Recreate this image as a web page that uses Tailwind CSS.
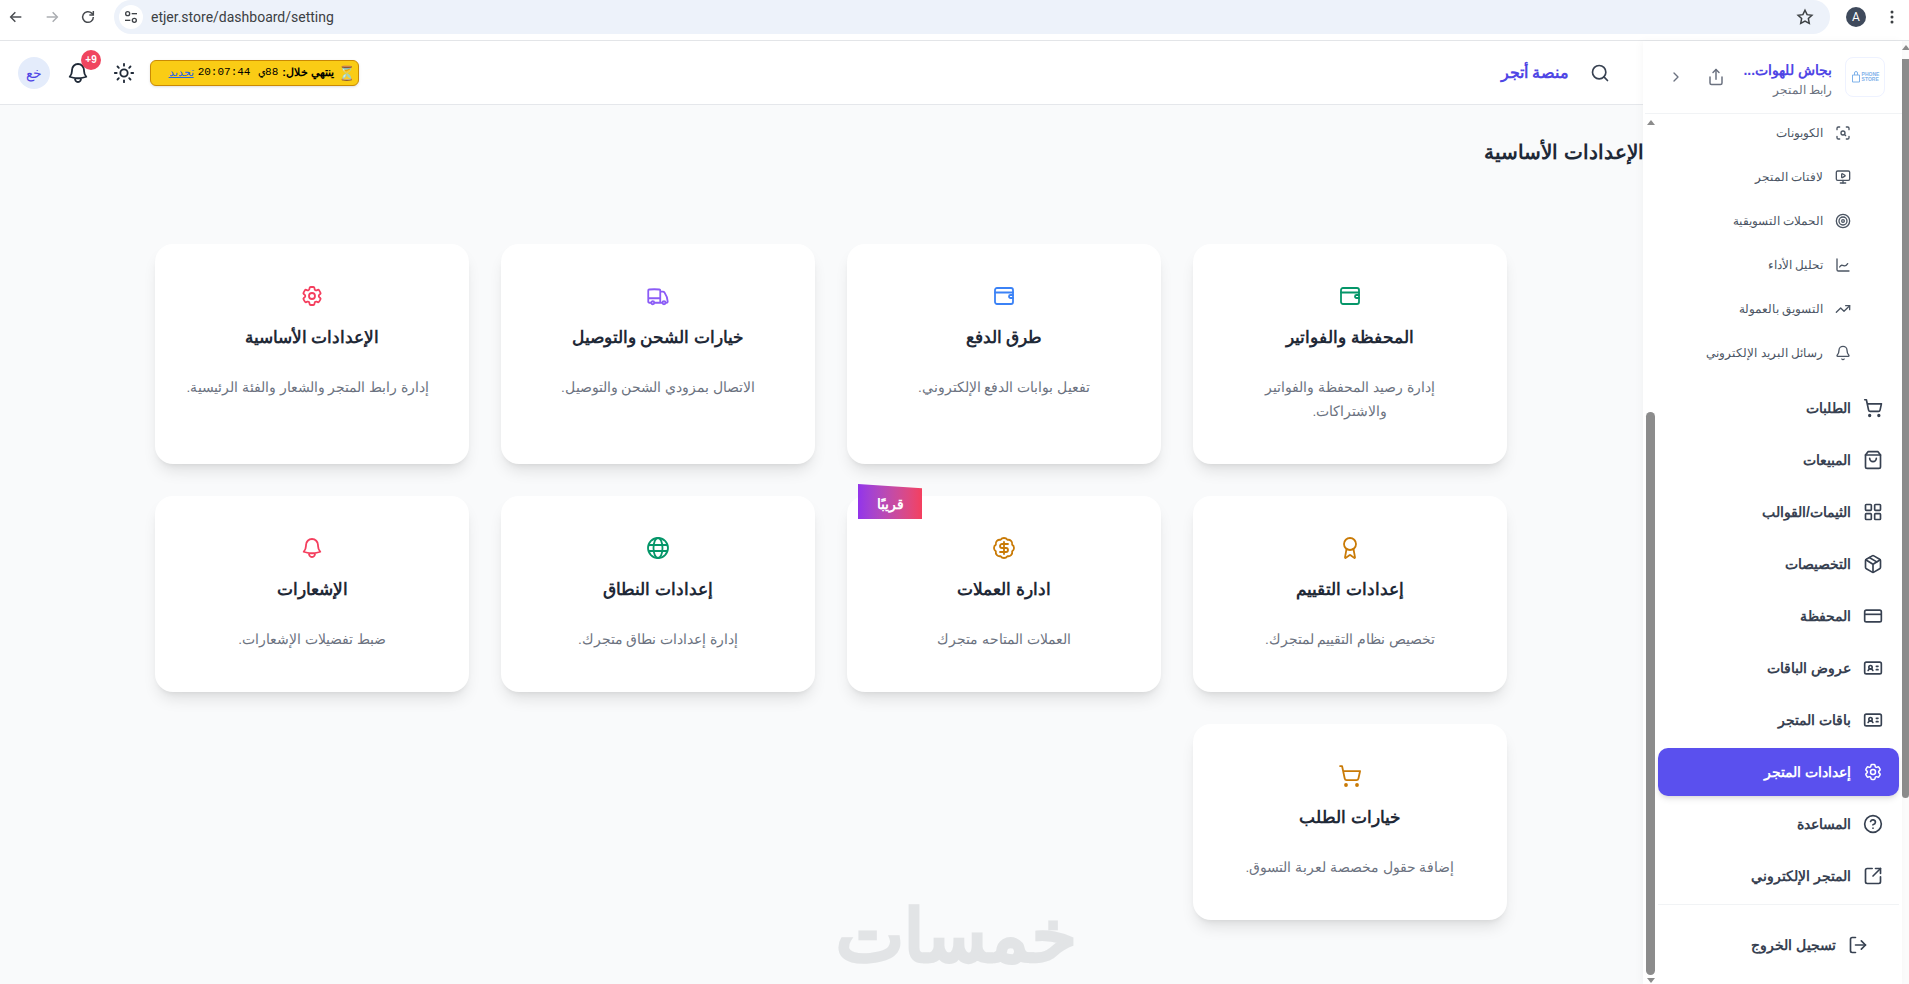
<!DOCTYPE html>
<html lang="ar" dir="rtl">
<head>
  <meta charset="UTF-8" />
  <meta name="viewport" content="width=device-width, initial-scale=1.0"/>
  <title>إعدادات المتجر</title>
  <script src="https://cdn.jsdelivr.net/npm/@tailwindcss/browser@4"></script>
</head>
<body class="h-screen overflow-hidden bg-white text-gray-800 font-['Liberation_Sans',sans-serif]">

  <!-- Browser bar -->
  <div dir="ltr" class="h-[41px] flex items-start border-b border-[#e3e5e8] bg-white">
    <div class="w-[114px] h-[34px] flex items-center shrink-0 pl-[8px] gap-[20px] text-[#474a4f]">
      <svg class="w-4 h-4" viewBox="0 0 24 24" fill="none" stroke="currentColor" stroke-width="2.2"><path d="M20 12H5"/><path d="m11 5-7 7 7 7"/></svg>
      <svg class="w-4 h-4 text-[#a9acb0]" viewBox="0 0 24 24" fill="none" stroke="currentColor" stroke-width="2.2"><path d="M4 12h15"/><path d="m13 5 7 7-7 7"/></svg>
      <svg class="w-4 h-4" viewBox="0 0 24 24" fill="none" stroke="currentColor" stroke-width="2.2"><path d="M20 12a8 8 0 1 1-2.5-5.8L20 8.5"/><path d="M20 3v6h-6"/></svg>
    </div>
    <div class="w-[1716px] h-[34px] rounded-[17px] bg-[#edf2fa] flex items-center pl-[5px] pr-[16px] font-['Roboto',sans-serif]">
      <div class="w-6 h-6 rounded-full bg-white flex items-center justify-center text-[#3f4348]">
        <svg class="w-4 h-4" viewBox="0 0 24 24" fill="none" stroke="currentColor" stroke-width="2"><circle cx="7" cy="7" r="3"/><path d="M13 7h8"/><circle cx="17" cy="17" r="3"/><path d="M3 17h8"/></svg>
      </div>
      <span class="ml-[8px] text-sm text-[#3c4043]">etjer.store/dashboard/setting</span>
      <svg class="w-[18px] h-[18px] ml-auto text-[#3c4043]" viewBox="0 0 24 24" fill="none" stroke="currentColor" stroke-width="2"><path d="m12 3 2.8 5.9 6.4.8-4.7 4.4 1.2 6.4L12 17.4l-5.7 3.1 1.2-6.4-4.7-4.4 6.4-.8z"/></svg>
    </div>
    <div class="flex-1 h-[34px] flex items-center pl-[16px] font-['Roboto',sans-serif]">
      <div class="w-5 h-5 rounded-full bg-[#3f4a5c] text-white text-xs flex items-center justify-center">A</div>
      <svg class="w-4 h-4 ml-[18px] text-[#3c4043]" viewBox="0 0 16 16" fill="currentColor"><circle cx="8" cy="3" r="1.5"/><circle cx="8" cy="8" r="1.5"/><circle cx="8" cy="13" r="1.5"/></svg>
    </div>
  </div>

  <div class="h-[943px] flex">
    <!-- Page scrollbar -->
    <div class="w-[7px] shrink-0 bg-[#fbfbfb] flex flex-col items-center">
      <div class="mt-[4px] w-0 h-0 border-x-[4px] border-x-transparent border-b-[5px] border-b-[#8c8c8c]"></div>
      <div class="mt-[9px] w-full h-[739px] bg-[#8c8c8c] rounded-b-md"></div>
    </div>

    <!-- Sidebar -->
    <aside class="relative z-10 w-[259px] shrink-0 bg-white pl-[2px] shadow-[-2px_0_8px_rgba(0,0,0,0.03)] flex flex-col">
      <div class="h-[73px] shrink-0 border-b border-[#f1f3f5] flex items-center pr-[17px]">
        <div class="w-10 h-10 rounded-lg border border-[#eef2ff] flex items-center justify-center shrink-0">
          <span dir="ltr" class="flex items-center gap-[1px] text-[#7fb2ea]">
            <svg class="w-[10px] h-3" viewBox="0 0 10 12" fill="none" stroke="currentColor" stroke-width="1"><path d="M1.5 4h7v7h-7z"/><path d="M3.5 4V2a1.5 1.5 0 0 1 3 0v2"/></svg>
            <span class="text-[5px] leading-[5px] font-bold">PHONE<br>STORE</span>
          </span>
        </div>
        <div class="mr-[13px] w-[88px] shrink-0">
          <div class="text-sm leading-6 pt-[1px] font-bold text-[#4f46e5] whitespace-nowrap">بجاش للهوات...</div>
          <div class="text-xs leading-4 text-[#6b7280]">رابط المتجر</div>
        </div>
        <svg class="mr-[19px] w-[18px] h-[18px] text-[#6b7280]" viewBox="0 0 24 24" fill="none" stroke="currentColor" stroke-width="2" stroke-linecap="round" stroke-linejoin="round"><path d="M4 12v8a2 2 0 0 0 2 2h12a2 2 0 0 0 2-2v-8"/><path d="m16 6-4-4-4 4"/><path d="M12 2v13"/></svg>
        <svg class="mr-[23px] w-4 h-4 text-[#6b7280]" viewBox="0 0 24 24" fill="none" stroke="currentColor" stroke-width="2" stroke-linecap="round" stroke-linejoin="round"><path d="m9 18 6-6-6-6"/></svg>
      </div>

      <!-- Sidebar scrollbar -->
      <div class="absolute left-[3px] top-[79px] bottom-0 w-[9px] flex flex-col items-center">
        <div class="w-0 h-0 border-x-[4px] border-x-transparent border-b-[5px] border-b-[#8c8c8c]"></div>
        <div class="mt-[287px] w-full h-[563px] shrink-0 bg-[#8c8c8c] rounded-full"></div>
        <div class="mt-[3px] w-0 h-0 border-x-[4px] border-x-transparent border-t-[5px] border-t-[#8c8c8c]"></div>
      </div>

      <nav class="flex-1 overflow-hidden pl-[13px] pr-[3px] text-[#374151]">
        <div class="-mt-[3px] mb-[9px] text-xs text-[#4b5563]">
          <a class="h-11 flex items-center gap-3 pr-12">
            <svg class="w-4 h-4" viewBox="0 0 24 24" fill="none" stroke="currentColor" stroke-width="2" stroke-linecap="round" stroke-linejoin="round"><path d="M3 7V5a2 2 0 0 1 2-2h2"/><path d="M17 3h2a2 2 0 0 1 2 2v2"/><path d="M21 17v2a2 2 0 0 1-2 2h-2"/><path d="M7 21H5a2 2 0 0 1-2-2v-2"/><circle cx="12" cy="12" r="3"/><path d="m16 16-1.9-1.9"/></svg>
            الكوبونات
          </a>
          <a class="h-11 flex items-center gap-3 pr-12">
            <svg class="w-4 h-4" viewBox="0 0 24 24" fill="none" stroke="currentColor" stroke-width="2" stroke-linecap="round" stroke-linejoin="round"><path d="M10 7.75a.75.75 0 0 1 1.142-.638l3.664 2.249a.75.75 0 0 1 0 1.278l-3.664 2.25a.75.75 0 0 1-1.142-.64z"/><path d="M12 17v4"/><path d="M8 21h8"/><rect x="2" y="3" width="20" height="14" rx="2"/></svg>
            لافتات المتجر
          </a>
          <a class="h-11 flex items-center gap-3 pr-12">
            <svg class="w-4 h-4" viewBox="0 0 24 24" fill="none" stroke="currentColor" stroke-width="2"><circle cx="12" cy="12" r="10"/><circle cx="12" cy="12" r="6"/><circle cx="12" cy="12" r="2"/></svg>
            الحملات التسويقية
          </a>
          <a class="h-11 flex items-center gap-3 pr-12">
            <svg class="w-4 h-4" viewBox="0 0 24 24" fill="none" stroke="currentColor" stroke-width="2" stroke-linecap="round" stroke-linejoin="round"><path d="M3 3v16a2 2 0 0 0 2 2h16"/><path d="M7 15c2-4 4-3 6-2s4 0 6-3"/></svg>
            تحليل الأداء
          </a>
          <a class="h-11 flex items-center gap-3 pr-12">
            <svg class="w-4 h-4" viewBox="0 0 24 24" fill="none" stroke="currentColor" stroke-width="2" stroke-linecap="round" stroke-linejoin="round"><path d="M22 7 13.5 15.5 8.5 10.5 2 17"/><path d="M16 7h6v6"/></svg>
            التسويق بالعمولة
          </a>
          <a class="h-11 flex items-center gap-3 pr-12">
            <svg class="w-4 h-4" viewBox="0 0 24 24" fill="none" stroke="currentColor" stroke-width="2" stroke-linecap="round" stroke-linejoin="round"><path d="M10.268 21a2 2 0 0 0 3.464 0"/><path d="M3.262 15.326A1 1 0 0 0 4 17h16a1 1 0 0 0 .74-1.673C19.41 13.956 18 12.499 18 8A6 6 0 0 0 6 8c0 4.499-1.411 5.956-2.738 7.326"/></svg>
            رسائل البريد الإلكتروني
          </a>
        </div>

        <div class="flex flex-col gap-1 text-sm font-bold">
          <a class="h-12 flex items-center gap-3 px-4">
            <svg class="w-5 h-5" viewBox="0 0 24 24" fill="none" stroke="currentColor" stroke-width="2" stroke-linecap="round" stroke-linejoin="round"><circle cx="8" cy="21" r="1"/><circle cx="19" cy="21" r="1"/><path d="M2.05 2.05h2l2.66 12.42a2 2 0 0 0 2 1.58h9.78a2 2 0 0 0 1.95-1.57l1.65-7.43H5.12"/></svg>
            الطلبات
          </a>
          <a class="h-12 flex items-center gap-3 px-4">
            <svg class="w-5 h-5" viewBox="0 0 24 24" fill="none" stroke="currentColor" stroke-width="2" stroke-linecap="round" stroke-linejoin="round"><path d="M6 2 3 6v14a2 2 0 0 0 2 2h14a2 2 0 0 0 2-2V6l-3-4Z"/><path d="M3 6h18"/><path d="M16 10a4 4 0 0 1-8 0"/></svg>
            المبيعات
          </a>
          <a class="h-12 flex items-center gap-3 px-4">
            <svg class="w-5 h-5" viewBox="0 0 24 24" fill="none" stroke="currentColor" stroke-width="2"><rect x="3" y="3" width="7" height="7" rx="1"/><rect x="14" y="3" width="7" height="7" rx="1"/><rect x="14" y="14" width="7" height="7" rx="1"/><rect x="3" y="14" width="7" height="7" rx="1"/></svg>
            الثيمات/القوالب
          </a>
          <a class="h-12 flex items-center gap-3 px-4">
            <svg class="w-5 h-5" viewBox="0 0 24 24" fill="none" stroke="currentColor" stroke-width="2" stroke-linecap="round" stroke-linejoin="round"><path d="M11 21.73a2 2 0 0 0 2 0l7-4A2 2 0 0 0 21 16V8a2 2 0 0 0-1-1.73l-7-4a2 2 0 0 0-2 0l-7 4A2 2 0 0 0 3 8v8a2 2 0 0 0 1 1.73z"/><path d="M12 22V12"/><path d="m3.3 7 7.703 4.734a2 2 0 0 0 1.994 0L20.7 7"/><path d="m7.5 4.27 9 5.15"/></svg>
            التخصيصات
          </a>
          <a class="h-12 flex items-center gap-3 px-4">
            <svg class="w-5 h-5" viewBox="0 0 24 24" fill="none" stroke="currentColor" stroke-width="2"><rect x="2" y="5" width="20" height="14" rx="2"/><path d="M2 10h20"/></svg>
            المحفظة
          </a>
          <a class="h-12 flex items-center gap-3 px-4">
            <svg class="w-5 h-5" viewBox="0 0 24 24" fill="none" stroke="currentColor" stroke-width="2" stroke-linecap="round" stroke-linejoin="round"><path d="M16 10h2"/><path d="M16 14h2"/><path d="M6.17 15a3 3 0 0 1 5.66 0"/><circle cx="9" cy="11" r="2"/><rect x="2" y="5" width="20" height="14" rx="2"/></svg>
            عروض الباقات
          </a>
          <a class="h-12 flex items-center gap-3 px-4">
            <svg class="w-5 h-5" viewBox="0 0 24 24" fill="none" stroke="currentColor" stroke-width="2" stroke-linecap="round" stroke-linejoin="round"><path d="M16 10h2"/><path d="M16 14h2"/><path d="M6.17 15a3 3 0 0 1 5.66 0"/><circle cx="9" cy="11" r="2"/><rect x="2" y="5" width="20" height="14" rx="2"/></svg>
            باقات المتجر
          </a>
          <a class="h-12 flex items-center gap-3 px-4 rounded-[10px] bg-[#5a50ee] text-white shadow-md">
            <svg class="w-5 h-5" viewBox="0 0 24 24" fill="none" stroke="currentColor" stroke-width="1.8" stroke-linecap="round" stroke-linejoin="round"><path d="M9.594 3.94c.09-.542.56-.94 1.11-.94h2.593c.55 0 1.02.398 1.11.94l.213 1.281c.063.374.313.686.645.87.074.04.147.083.22.127.325.196.72.257 1.075.124l1.217-.456a1.125 1.125 0 0 1 1.37.49l1.296 2.247a1.125 1.125 0 0 1-.26 1.431l-1.003.827c-.293.241-.438.613-.43.992a7.723 7.723 0 0 1 0 .255c-.008.378.137.75.43.991l1.004.827c.424.35.534.955.26 1.43l-1.298 2.247a1.125 1.125 0 0 1-1.369.491l-1.217-.456c-.355-.133-.75-.072-1.076.124a6.47 6.47 0 0 1-.22.128c-.331.183-.581.495-.644.869l-.213 1.281c-.09.543-.56.94-1.11.94h-2.594c-.55 0-1.019-.398-1.11-.94l-.213-1.281c-.062-.374-.312-.686-.644-.87a6.52 6.52 0 0 1-.22-.127c-.325-.196-.72-.257-1.076-.124l-1.217.456a1.125 1.125 0 0 1-1.369-.49l-1.297-2.247a1.125 1.125 0 0 1 .26-1.431l1.004-.827c.292-.24.437-.613.43-.991a6.932 6.932 0 0 1 0-.255c.007-.38-.138-.751-.43-.992l-1.004-.827a1.125 1.125 0 0 1-.26-1.43l1.297-2.247a1.125 1.125 0 0 1 1.37-.491l1.216.456c.356.133.751.072 1.076-.124.072-.044.146-.086.22-.128.332-.183.582-.495.644-.869l.214-1.28Z"/><path d="M15 12a3 3 0 1 1-6 0 3 3 0 0 1 6 0Z"/></svg>
            إعدادات المتجر
          </a>
          <a class="h-12 flex items-center gap-3 px-4">
            <svg class="w-5 h-5" viewBox="0 0 24 24" fill="none" stroke="currentColor" stroke-width="2" stroke-linecap="round" stroke-linejoin="round"><circle cx="12" cy="12" r="10"/><path d="M9.09 9a3 3 0 0 1 5.83 1c0 2-3 3-3 3"/><path d="M12 17h.01"/></svg>
            المساعدة
          </a>
          <a class="h-12 flex items-center gap-3 px-4">
            <svg class="w-5 h-5" viewBox="0 0 24 24" fill="none" stroke="currentColor" stroke-width="2" stroke-linecap="round" stroke-linejoin="round"><path d="M21 13v6a2 2 0 0 1-2 2H5a2 2 0 0 1-2-2V5a2 2 0 0 1 2-2h6"/><path d="m21 3-9 9"/><path d="M15 3h6v6"/></svg>
            المتجر الإلكتروني
          </a>
        </div>
        <div class="mt-1 mb-4 border-t border-[#f1f3f5]"></div>
        <a class="h-12 flex items-center gap-3 pr-[31px] text-sm font-bold">
          <svg class="w-5 h-5" viewBox="0 0 24 24" fill="none" stroke="currentColor" stroke-width="2" stroke-linecap="round" stroke-linejoin="round"><path d="M9 21H5a2 2 0 0 1-2-2V5a2 2 0 0 1 2-2h4"/><path d="m16 17 5-5-5-5"/><path d="M21 12H9"/></svg>
          تسجيل الخروج
        </a>
      </nav>
    </aside>

    <!-- Main -->
    <main class="relative flex-1 min-w-0 overflow-hidden bg-[#f9fafb] flex flex-col">
      <header class="h-[64px] shrink-0 bg-white border-b border-[#e5e7eb] flex items-center">
        <svg class="mr-[33px] w-5 h-5 text-[#374151]" viewBox="0 0 24 24" fill="none" stroke="currentColor" stroke-width="2" stroke-linecap="round" stroke-linejoin="round"><circle cx="11" cy="11" r="8"/><path d="m21 21-4.3-4.3"/></svg>
        <span class="mr-[21px] text-base font-bold text-[#4f46e5]">منصة أتجر</span>

        <div class="mr-auto h-[26px] w-[209px] rounded-md border border-[#ca8a04] bg-[#facc15] shadow-sm flex items-center pr-[3px] gap-1 text-[11px] text-black">
          <span class="text-sm leading-none">⏳</span>
          <b>ينتهي خلال:</b>
          <span class="font-['Liberation_Mono',monospace]">88ي</span>
          <span dir="ltr" class="mr-1 font-['Liberation_Mono',monospace]">20:07:44</span>
          <a class="text-[#2563eb] underline">تجديد</a>
        </div>
        <svg class="mr-[15px] w-[22px] h-[22px] text-[#1f2937]" viewBox="0 0 24 24" fill="none" stroke="currentColor" stroke-width="2" stroke-linecap="round"><circle cx="12" cy="12" r="4"/><path d="M12 2v2"/><path d="M12 20v2"/><path d="m4.93 4.93 1.41 1.41"/><path d="m17.66 17.66 1.41 1.41"/><path d="M2 12h2"/><path d="M20 12h2"/><path d="m6.34 17.66-1.41 1.41"/><path d="m19.07 4.93-1.41 1.41"/></svg>
        <div class="relative mr-[23px] w-6 h-6 text-[#1f2937]">
          <svg class="w-6 h-6" viewBox="0 0 24 24" fill="none" stroke="currentColor" stroke-width="1.8" stroke-linecap="round" stroke-linejoin="round"><path d="M14.857 17.082a23.848 23.848 0 0 0 5.454-1.31A8.967 8.967 0 0 1 18 9.75V9A6 6 0 0 0 6 9v.75a8.967 8.967 0 0 1-2.312 6.022c1.733.64 3.56 1.085 5.455 1.31m5.714 0a24.255 24.255 0 0 1-5.714 0m5.714 0a3 3 0 1 1-5.714 0"/></svg>
          <span dir="ltr" class="absolute -top-[11px] left-[15px] w-5 h-5 rounded-full bg-[#f0455f] text-white text-[10px] font-bold flex items-center justify-center">+9</span>
        </div>
        <div class="mr-[16px] ml-[18px] w-8 h-8 rounded-full bg-[#e4ecfb] text-[#4f46e5] text-sm flex items-center justify-center">خع</div>
      </header>

      <h1 class="mt-[31px] -mr-[1px] text-xl leading-8 font-bold text-[#1f2937]">الإعدادات الأساسية</h1>

      <div class="mt-[76px] pr-[136px] pl-[155px] grid grid-cols-4 gap-8 items-stretch">
        <div class="bg-white rounded-[18px] shadow-lg p-10 text-center">
          <svg class="mx-auto w-6 h-6 text-[#059669]" viewBox="0 0 24 24" fill="none" stroke="currentColor" stroke-width="1.8" stroke-linecap="round" stroke-linejoin="round"><rect x="3" y="4" width="18" height="16" rx="2"/><path d="M3 8.5h18"/><path d="M21 11h-2.5a1.5 1.5 0 0 0 0 3H21"/></svg>
          <h3 class="mt-[15px] mb-[25px] text-[16.5px] leading-7 font-bold text-[#1f2937]">المحفظة والفواتير</h3>
          <p class="text-[13.5px] leading-6 text-[#6b7280]">إدارة رصيد المحفظة والفواتير والاشتراكات.</p>
        </div>
        <div class="bg-white rounded-[18px] shadow-lg p-10 text-center">
          <svg class="mx-auto w-6 h-6 text-[#3b82f6]" viewBox="0 0 24 24" fill="none" stroke="currentColor" stroke-width="1.8" stroke-linecap="round" stroke-linejoin="round"><rect x="3" y="4" width="18" height="16" rx="2"/><path d="M3 8.5h18"/><path d="M21 11h-2.5a1.5 1.5 0 0 0 0 3H21"/></svg>
          <h3 class="mt-[15px] mb-[25px] text-[16.5px] leading-7 font-bold text-[#1f2937]">طرق الدفع</h3>
          <p class="text-[13.5px] leading-6 text-[#6b7280]">تفعيل بوابات الدفع الإلكتروني.</p>
        </div>
        <div class="bg-white rounded-[18px] shadow-lg p-10 text-center">
          <svg class="mx-auto w-6 h-6 text-[#8b5cf6]" viewBox="0 0 24 24" fill="none" stroke="currentColor" stroke-width="1.8" stroke-linecap="round" stroke-linejoin="round"><path d="M8.25 18.75a1.5 1.5 0 0 1-3 0m3 0a1.5 1.5 0 0 0-3 0m3 0h6m-9 0H3.375a1.125 1.125 0 0 1-1.125-1.125V14.25m17.25 4.5a1.5 1.5 0 0 1-3 0m3 0a1.5 1.5 0 0 0-3 0m3 0h1.125c.621 0 1.129-.504 1.09-1.124a17.902 17.902 0 0 0-3.213-9.193 2.056 2.056 0 0 0-1.58-.86H14.25M16.5 18.75h-2.25m0-11.177v-.958c0-.568-.422-1.048-.987-1.106a48.554 48.554 0 0 0-10.026 0 1.106 1.106 0 0 0-.987 1.106v7.635m12-6.677v6.677m0 4.5v-4.5m0 0h-12"/></svg>
          <h3 class="mt-[15px] mb-[25px] text-[16.5px] leading-7 font-bold text-[#1f2937]">خيارات الشحن والتوصيل</h3>
          <p class="text-[13.5px] leading-6 text-[#6b7280]">الاتصال بمزودي الشحن والتوصيل.</p>
        </div>
        <div class="bg-white rounded-[18px] shadow-lg p-10 text-center">
          <svg class="mx-auto w-6 h-6 text-[#f43f5e]" viewBox="0 0 24 24" fill="none" stroke="currentColor" stroke-width="1.8" stroke-linecap="round" stroke-linejoin="round"><path d="M9.594 3.94c.09-.542.56-.94 1.11-.94h2.593c.55 0 1.02.398 1.11.94l.213 1.281c.063.374.313.686.645.87.074.04.147.083.22.127.325.196.72.257 1.075.124l1.217-.456a1.125 1.125 0 0 1 1.37.49l1.296 2.247a1.125 1.125 0 0 1-.26 1.431l-1.003.827c-.293.241-.438.613-.43.992a7.723 7.723 0 0 1 0 .255c-.008.378.137.75.43.991l1.004.827c.424.35.534.955.26 1.43l-1.298 2.247a1.125 1.125 0 0 1-1.369.491l-1.217-.456c-.355-.133-.75-.072-1.076.124a6.47 6.47 0 0 1-.22.128c-.331.183-.581.495-.644.869l-.213 1.281c-.09.543-.56.94-1.11.94h-2.594c-.55 0-1.019-.398-1.11-.94l-.213-1.281c-.062-.374-.312-.686-.644-.87a6.52 6.52 0 0 1-.22-.127c-.325-.196-.72-.257-1.076-.124l-1.217.456a1.125 1.125 0 0 1-1.369-.49l-1.297-2.247a1.125 1.125 0 0 1 .26-1.431l1.004-.827c.292-.24.437-.613.43-.991a6.932 6.932 0 0 1 0-.255c.007-.38-.138-.751-.43-.992l-1.004-.827a1.125 1.125 0 0 1-.26-1.43l1.297-2.247a1.125 1.125 0 0 1 1.37-.491l1.216.456c.356.133.751.072 1.076-.124.072-.044.146-.086.22-.128.332-.183.582-.495.644-.869l.214-1.28Z"/><path d="M15 12a3 3 0 1 1-6 0 3 3 0 0 1 6 0Z"/></svg>
          <h3 class="mt-[15px] mb-[25px] text-[16.5px] leading-7 font-bold text-[#1f2937]">الإعدادات الأساسية</h3>
          <p class="whitespace-nowrap text-[13.5px] leading-6 text-[#6b7280]">إدارة رابط المتجر والشعار والفئة الرئيسية.</p>
        </div>

        <div class="bg-white rounded-[18px] shadow-lg p-10 text-center">
          <svg class="mx-auto w-6 h-6 text-[#c97a06]" viewBox="0 0 24 24" fill="none" stroke="currentColor" stroke-width="1.8" stroke-linecap="round" stroke-linejoin="round"><path d="m15.477 12.89 1.515 8.526a.5.5 0 0 1-.81.47l-3.58-2.687a1 1 0 0 0-1.197 0l-3.586 2.686a.5.5 0 0 1-.81-.469l1.514-8.526"/><circle cx="12" cy="8" r="6"/></svg>
          <h3 class="mt-[15px] mb-[25px] text-[16.5px] leading-7 font-bold text-[#1f2937]">إعدادات التقييم</h3>
          <p class="text-[13.5px] leading-6 text-[#6b7280]">تخصيص نظام التقييم لمتجرك.</p>
        </div>
        <div class="relative bg-white rounded-[18px] shadow-lg p-10 text-center">
          <span class="absolute left-[11px] -top-[12px] w-16 h-[35px] pt-[5px] flex items-center justify-center bg-gradient-to-r from-[#9333ea] to-[#f43f5e] text-white text-sm font-bold [clip-path:polygon(0_0,100%_12%,100%_100%,0_100%)]">قريبًا</span>
          <svg class="mx-auto w-6 h-6 text-[#c97a06]" viewBox="0 0 24 24" fill="none" stroke="currentColor" stroke-width="1.8" stroke-linecap="round" stroke-linejoin="round"><path d="M3.85 8.62a4 4 0 0 1 4.78-4.77 4 4 0 0 1 6.74 0 4 4 0 0 1 4.78 4.78 4 4 0 0 1 0 6.74 4 4 0 0 1-4.77 4.78 4 4 0 0 1-6.75 0 4 4 0 0 1-4.78-4.77 4 4 0 0 1 0-6.76Z"/><path d="M16 8h-6a2 2 0 1 0 0 4h4a2 2 0 1 1 0 4H8"/><path d="M12 18V6"/></svg>
          <h3 class="mt-[15px] mb-[25px] text-[16.5px] leading-7 font-bold text-[#1f2937]">ادارة العملات</h3>
          <p class="text-[13.5px] leading-6 text-[#6b7280]">العملات المتاحه متجرك</p>
        </div>
        <div class="bg-white rounded-[18px] shadow-lg p-10 text-center">
          <svg class="mx-auto w-6 h-6 text-[#059669]" viewBox="0 0 24 24" fill="none" stroke="currentColor" stroke-width="1.8" stroke-linecap="round" stroke-linejoin="round"><circle cx="12" cy="12" r="10"/><ellipse cx="12" cy="12" rx="4.5" ry="10"/><path d="M3 9h18"/><path d="M3 15h18"/></svg>
          <h3 class="mt-[15px] mb-[25px] text-[16.5px] leading-7 font-bold text-[#1f2937]">إعدادات النطاق</h3>
          <p class="text-[13.5px] leading-6 text-[#6b7280]">إدارة إعدادات نطاق متجرك.</p>
        </div>
        <div class="bg-white rounded-[18px] shadow-lg p-10 text-center">
          <svg class="mx-auto w-6 h-6 text-[#f43f5e]" viewBox="0 0 24 24" fill="none" stroke="currentColor" stroke-width="1.8" stroke-linecap="round" stroke-linejoin="round"><path d="M14.857 17.082a23.848 23.848 0 0 0 5.454-1.31A8.967 8.967 0 0 1 18 9.75V9A6 6 0 0 0 6 9v.75a8.967 8.967 0 0 1-2.312 6.022c1.733.64 3.56 1.085 5.455 1.31m5.714 0a24.255 24.255 0 0 1-5.714 0m5.714 0a3 3 0 1 1-5.714 0"/></svg>
          <h3 class="mt-[15px] mb-[25px] text-[16.5px] leading-7 font-bold text-[#1f2937]">الإشعارات</h3>
          <p class="text-[13.5px] leading-6 text-[#6b7280]">ضبط تفضيلات الإشعارات.</p>
        </div>

        <div class="bg-white rounded-[18px] shadow-lg p-10 text-center">
          <svg class="mx-auto w-6 h-6 text-[#c97a06]" viewBox="0 0 24 24" fill="none" stroke="currentColor" stroke-width="1.8" stroke-linecap="round" stroke-linejoin="round"><circle cx="8" cy="21" r="1"/><circle cx="19" cy="21" r="1"/><path d="M2.05 2.05h2l2.66 12.42a2 2 0 0 0 2 1.58h9.78a2 2 0 0 0 1.95-1.57l1.65-7.43H5.12"/></svg>
          <h3 class="mt-[15px] mb-[25px] text-[16.5px] leading-7 font-bold text-[#1f2937]">خيارات الطلب</h3>
          <p class="text-[13.5px] leading-6 text-[#6b7280]">إضافة حقول مخصصة لعربة التسوق.</p>
        </div>
      </div>

      <!-- Watermark -->
      <span class="absolute left-[836px] top-[860px] text-[72px] leading-[70px] font-bold text-[#e2e4e6] [-webkit-text-stroke:2px_#e2e4e6]">خمسات</span>
    </main>
  </div>
</body>
</html>
